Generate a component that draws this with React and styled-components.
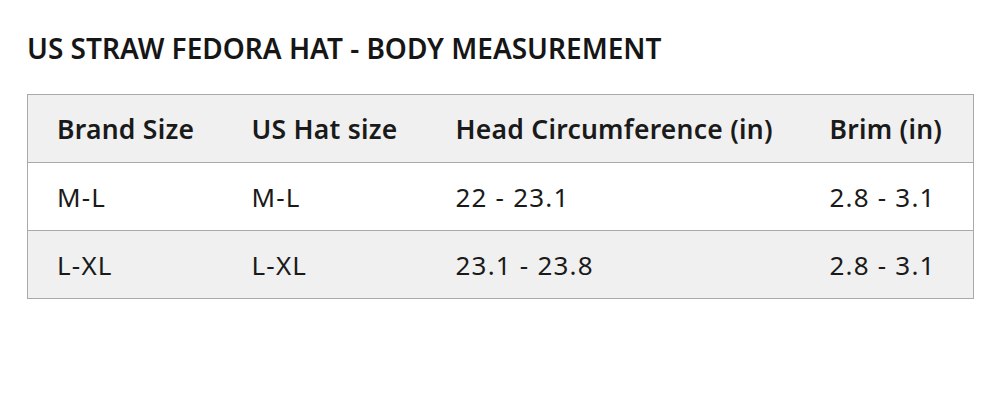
import React from 'react';
import styled, { createGlobalStyle } from 'styled-components';

const GlobalStyle = createGlobalStyle`
    html, body {
        margin: 0;
        padding: 0;
        background: #ffffff;
    }
    body {
        font-family: "Noto Sans", "Open Sans", sans-serif;
        color: #111111;
    }
`;

const columns = [
    { label: 'Brand Size', width: 195 },
    { label: 'US Hat size', width: 204 },
    { label: 'Head Circumference (in)', width: 374 },
    { label: 'Brim (in)', width: 173 },
];

const rows = [
    ['M-L', 'M-L', '22 - 23.1', '2.8 - 3.1'],
    ['L-XL', 'L-XL', '23.1 - 23.8', '2.8 - 3.1'],
];

const App = () => {
    return (
        <Page>
            <GlobalStyle />
            <Title>US STRAW FEDORA HAT - BODY MEASUREMENT</Title>
            <Table>
                <colgroup>
                    {columns.map(col => <col key={col.label} style={{ width: col.width }} />)}
                </colgroup>
                <thead>
                    <Row shaded>
                        {columns.map(col => <HeadCell key={col.label}>{col.label}</HeadCell>)}
                    </Row>
                </thead>
                <tbody>
                    {rows.map((row, i) => (
                        <Row key={i} shaded={i % 2 === 1}>
                            {row.map((cell, j) => <Cell key={j}>{cell}</Cell>)}
                        </Row>
                    ))}
                </tbody>
            </Table>
        </Page>
    );
};

export default App;

const Page = styled.div`
    width: 1008px;
    height: 400px;
    padding: 31px 0 0 27px;
    box-sizing: border-box;
`;

const Title = styled.h1`
    margin: 0 0 29px 0;
    font-size: 28px;
    font-weight: 600;
    line-height: 34px;
    letter-spacing: 0;
    color: #161616;
`;

const Table = styled.table`
    width: 946px;
    table-layout: fixed;
    border-collapse: collapse;
    border: 1px solid #a9a9a9;
`;

const Row = styled.tr`
    height: 68px;
    background-color: ${props => props.shaded ? '#f0f0f0' : '#ffffff'};
    border-bottom: 1px solid #a9a9a9;
`;

const HeadCell = styled.th`
    padding: 0 0 0 29px;
    text-align: left;
    font-size: 26.5px;
    font-weight: 600;
    letter-spacing: 0.25px;
    color: #1a1a1a;
`;

const Cell = styled.td`
    padding: 0 0 0 29px;
    font-size: 26px;
    font-weight: 400;
    letter-spacing: 1.2px;
    color: #1a1a1a;
`;
